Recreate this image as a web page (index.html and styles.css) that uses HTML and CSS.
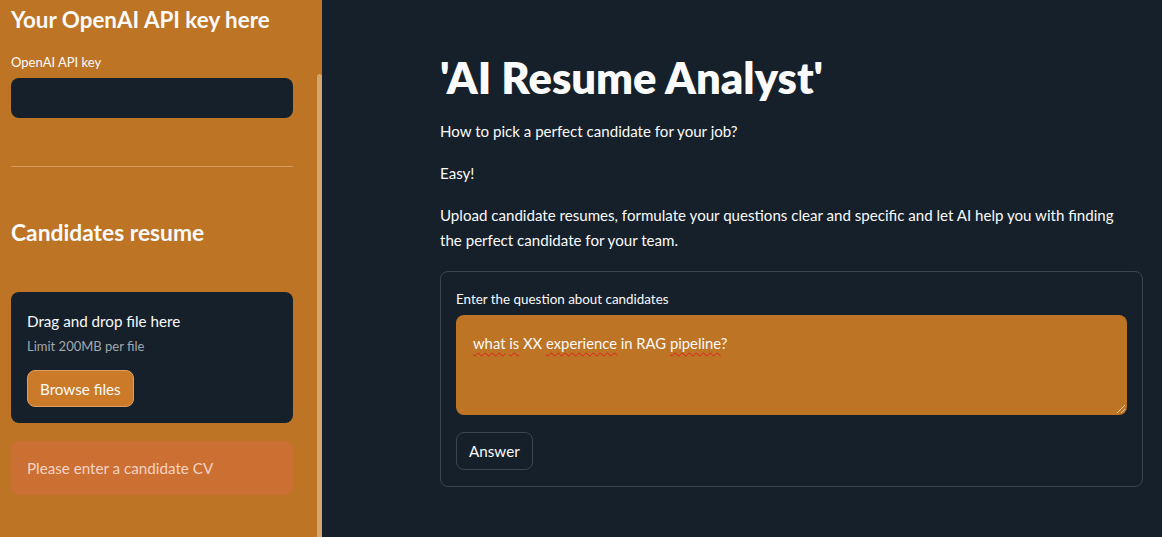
FILE: index.html
```html
<!DOCTYPE html>
<html lang="en">
<head>
<meta charset="utf-8">
<title>AI Resume Analyst</title>
<link rel="stylesheet" href="styles.css">
</head>
<body>
<div class="app">
  <aside class="sidebar">
    <div class="side-content">
      <h2 class="side-h">Your OpenAI API key here</h2>
      <label class="side-label">OpenAI API key</label>
      <div class="key-input"></div>
      <hr class="divider">
      <h2 class="side-h side-h2">Candidates resume</h2>
      <div class="dropzone">
        <div class="dz-title">Drag and drop file here</div>
        <div class="dz-sub">Limit 200MB per file</div>
        <button class="browse">Browse files</button>
      </div>
      <div class="alert">Please enter a candidate CV</div>
    </div>
    <div class="scrollbar"></div>
  </aside>
  <main class="main">
    <div class="block">
      <h1 class="title">'AI Resume Analyst'</h1>
      <p class="para">How to pick a perfect candidate for your job?</p>
      <p class="para">Easy!</p>
      <p class="para">Upload candidate resumes, formulate your questions clear and specific and let AI help you with finding the perfect candidate for your team.</p>
      <div class="form">
        <div class="form-label">Enter the question about candidates</div>
        <div class="textarea"><span class="sp">what</span> <span class="sp">is</span> XX <span class="sp">experience</span> in RAG <span class="sp">pipeline</span>?<span class="grip"></span></div>
        <button class="answer">Answer</button>
      </div>
    </div>
  </main>
</div>
</body>
</html>
```
FILE: styles.css
```css
* { box-sizing: border-box; }
html, body { margin: 0; padding: 0; height: 100%; }
body {
  font-family: "Lato", "Open Sans", sans-serif;
  background: #15202b;
  color: #fafafa;
  overflow: hidden;
}
.app { display: flex; height: 537px; }
.sidebar {
  position: relative;
  width: 323px;
  flex: none;
  background: #bd7425;
  border-right: 1px solid #15202b;
}
.side-content { padding: 5px 30px 0 11px; display: flex; flex-direction: column; }
.side-h {
  margin: 0;
  font-size: 22.4px;
  font-weight: 700;
  line-height: 30px;
  color: #fafafa;
}
.side-label { font-size: 13px; margin-top: 18px; line-height: 18px; }
.key-input {
  margin-top: 7px;
  height: 40px;
  background: #15202b;
  border-radius: 8px;
  width: 282px;
}
.divider {
  margin: 48px 0 0;
  border: 0;
  border-top: 1px solid #d49a5e;
  width: 282px;
}
.side-h2 { margin-top: 50px; font-size: 22.8px; }
.dropzone {
  margin-top: 45px;
  width: 282px;
  background: #15202b;
  border-radius: 8px;
  padding: 18px 16px 16px;
  display: flex;
  flex-direction: column;
  align-items: flex-start;
}
.dz-title { font-size: 15.2px; line-height: 22px; }
.dz-sub { font-size: 13px; color: #a3a8ae; margin-top: 5px; line-height: 18px; }
.browse {
  margin-top: 15px;
  font-family: inherit;
  font-size: 15.2px;
  color: #fafafa;
  background: #ca7a29;
  border: 1px solid #dea062;
  border-radius: 8px;
  height: 37px;
  padding: 0 12px;
}
.alert {
  margin-top: 18px;
  width: 282px;
  height: 54px;
  border-radius: 8px;
  background: #cc6f33;
  color: #f6d3c2;
  font-size: 15.2px;
  padding: 0 16px;
  display: flex;
  align-items: center;
}
.scrollbar {
  position: absolute;
  left: 317px;
  top: 74px;
  width: 5px;
  height: 470px;
  border-radius: 3px;
  background: #d6a670;
}
.main { flex: 1; padding: 0 19px 0 117px; }
.block { display: flex; flex-direction: column; }
.title {
  margin: 51px 0 0;
  font-size: 43.5px;
  font-weight: 800;
  line-height: 52px;
}
.para { margin: 0 0 17px; padding-right: 20px; font-size: 15.1px; line-height: 25px; }
.para:first-of-type { margin-top: 16px; }
.form {
  margin-top: 1px;
  border: 1px solid #3b4651;
  border-radius: 8px;
  padding: 17px 15px 16px;
  display: flex;
  flex-direction: column;
  align-items: flex-start;
}
.form-label { font-size: 13.4px; line-height: 20px; }
.textarea {
  position: relative;
  margin-top: 6px;
  width: 100%;
  height: 100px;
  background: #bd7425;
  border-radius: 8px;
  padding: 17px 17px;
  font-size: 14.8px;
  line-height: 22px;
}
.sp { text-decoration: underline wavy #e0201c; text-decoration-thickness: 1px; text-underline-offset: 3px; }
.grip {
  position: absolute;
  right: 2px;
  bottom: 2px;
  width: 8px;
  height: 8px;
  background: linear-gradient(135deg, transparent 45%, #e8c9a0 45%, #e8c9a0 55%, transparent 55%, transparent 70%, #e8c9a0 70%, #e8c9a0 80%, transparent 80%);
}
.answer {
  margin-top: 17px;
  font-family: inherit;
  font-size: 15.2px;
  color: #fafafa;
  background: #15202b;
  border: 1px solid #3b4651;
  border-radius: 8px;
  height: 38px;
  padding: 0 12px;
}
```
